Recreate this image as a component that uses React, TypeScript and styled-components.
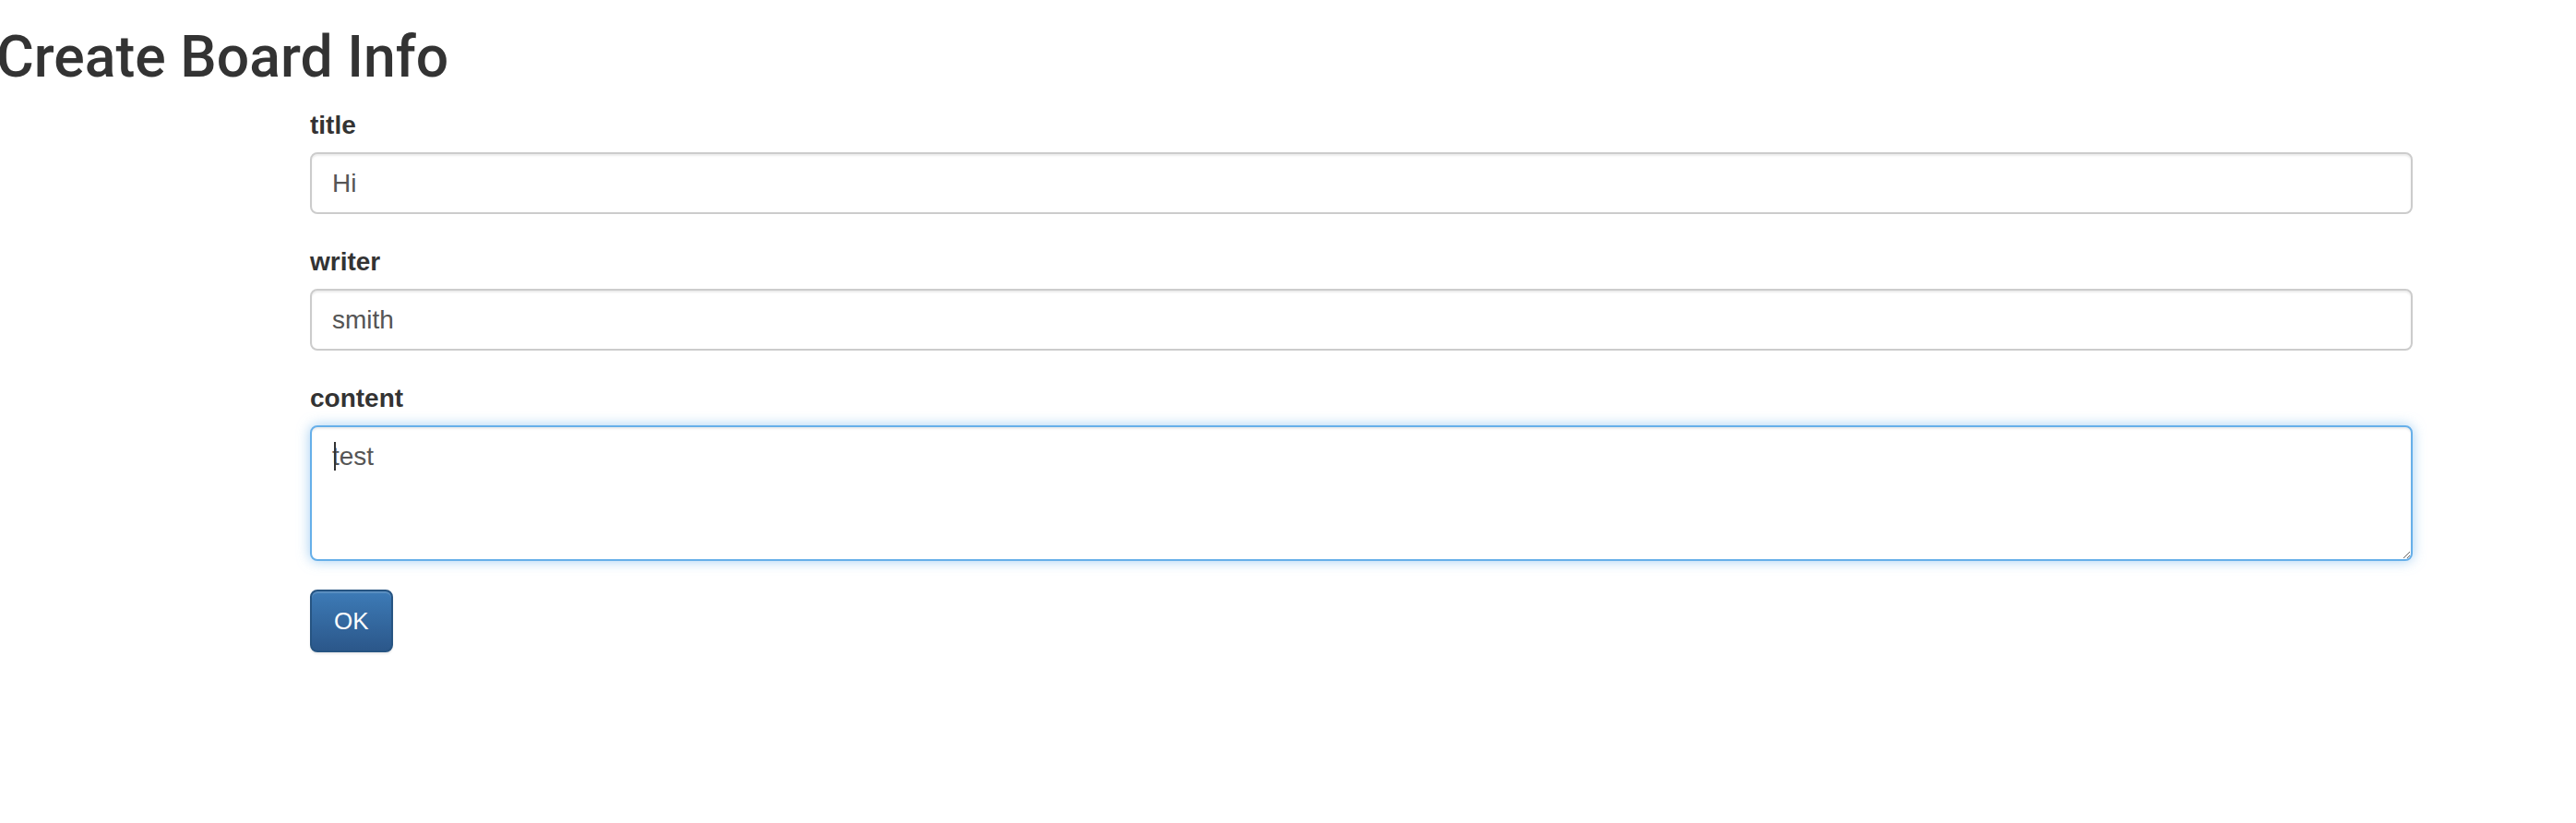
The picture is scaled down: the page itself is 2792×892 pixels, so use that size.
import React from "react";
import styled, { createGlobalStyle } from "styled-components";

const Global = createGlobalStyle`
  html, body { margin: 0; padding: 0; background: #fff; }
  body {
    font-family: "Liberation Sans", Arial, Helvetica, sans-serif;
    color: #333;
  }
  * { box-sizing: border-box; }
`;

const Page = styled.div`
  width: 2792px;
  min-height: 892px;
  display: flex;
  flex-direction: column;
`;

const Heading = styled.h1`
  margin: 28px 0 21px -4px;
  font-family: Roboto, "Liberation Sans", sans-serif;
  font-weight: 500;
  font-size: 62.5px;
  line-height: 68px;
  color: #333;
`;

const Form = styled.form`
  display: flex;
  flex-direction: column;
  padding: 0 177px 0 336px;
`;

const Group = styled.div<{ $gap?: number }>`
  display: flex;
  flex-direction: column;
  margin-bottom: ${(p) => p.$gap ?? 33}px;
`;

const Label = styled.label`
  font-weight: 700;
  font-size: 28px;
  line-height: 38px;
  color: #333;
  margin-bottom: 10px;
`;

const Input = styled.input`
  display: block;
  width: 100%;
  height: 67px;
  padding: 0 22px;
  font-family: "Liberation Sans", Arial, sans-serif;
  font-size: 28px;
  color: #555;
  background: #fff;
  border: 2px solid #ccc;
  border-radius: 8px;
  box-shadow: inset 0 2px 2px rgba(0, 0, 0, 0.075);
  outline: none;
`;

const AreaWrap = styled.div`
  position: relative;
  display: flex;
`;

const TextArea = styled.textarea<{ $focused?: boolean }>`
  display: block;
  width: 100%;
  height: 147px;
  padding: 12px 22px;
  font-family: "Liberation Sans", Arial, sans-serif;
  font-size: 28px;
  line-height: 40px;
  color: #555;
  background: #fff;
  border: 2px solid ${(p) => (p.$focused ? "#66afe9" : "#ccc")};
  border-radius: 8px;
  outline: none;
  resize: vertical;
  box-shadow: ${(p) =>
    p.$focused
      ? "inset 0 2px 2px rgba(0,0,0,.075), 0 0 14px rgba(102,175,233,.6)"
      : "inset 0 2px 2px rgba(0,0,0,.075)"};
`;

const Caret = styled.span`
  position: absolute;
  left: 26px;
  top: 18px;
  width: 2px;
  height: 31px;
  background: #333;
`;

const Actions = styled.div`
  display: flex;
`;

const Button = styled.button`
  height: 68px;
  padding: 0 24px;
  font-family: "Liberation Sans", Arial, sans-serif;
  font-size: 26px;
  line-height: 38px;
  color: #fff;
  background-image: linear-gradient(to bottom, #3d7bb7 0%, #2b578a 100%);
  border: 2px solid #265482;
  border-radius: 8px;
  box-shadow: inset 0 2px 0 rgba(255, 255, 255, 0.15), 0 2px 2px rgba(0, 0, 0, 0.075);
  cursor: pointer;
`;

export default function App() {
  return (
    <>
      <Global />
      <Page>
        <Heading>Create Board Info</Heading>
        <Form onSubmit={(e) => e.preventDefault()}>
          <Group>
            <Label htmlFor="title">title</Label>
            <Input id="title" defaultValue="Hi" />
          </Group>
          <Group>
            <Label htmlFor="writer">writer</Label>
            <Input id="writer" defaultValue="smith" />
          </Group>
          <Group $gap={31}>
            <Label htmlFor="content">content</Label>
            <AreaWrap>
              <TextArea id="content" $focused defaultValue="test" />
              <Caret />
            </AreaWrap>
          </Group>
          <Actions>
            <Button type="submit">OK</Button>
          </Actions>
        </Form>
      </Page>
    </>
  );
}
